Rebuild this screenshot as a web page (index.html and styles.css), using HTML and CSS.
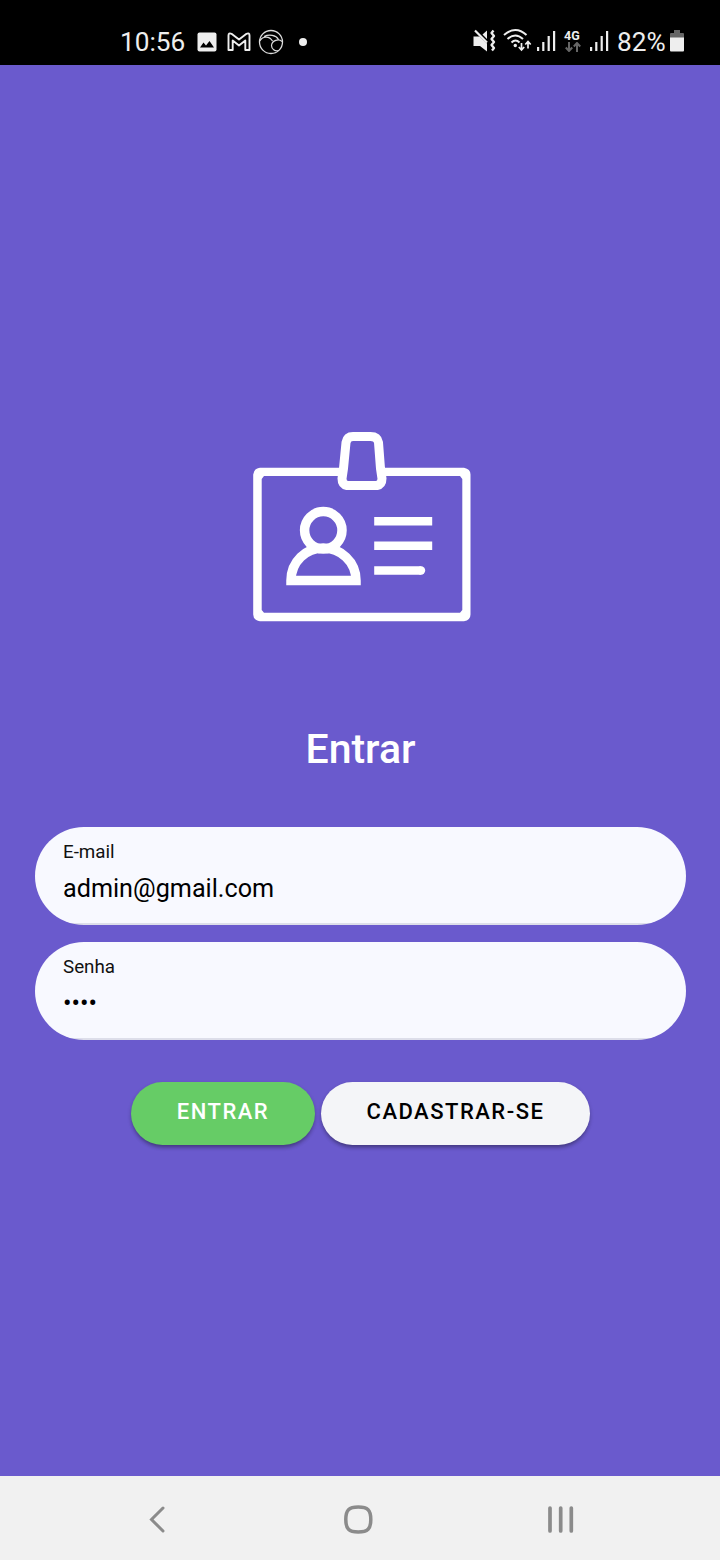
FILE: index.html
```html
<!DOCTYPE html>
<html lang="pt-BR">
<head>
<meta charset="utf-8">
<title>Entrar</title>
<link rel="stylesheet" href="styles.css">
</head>
<body>
<header class="status">
  <div class="status-left">
    <span class="clock">10:56</span>
    <svg class="ic-image" width="20" height="20" viewBox="0 0 20 20"><rect x=".5" y=".5" width="19" height="19" rx="2" fill="#eee"/><path d="M3 15.500l3.500-5 2.500 3 3.500-4.500 4.500 6.500z" fill="#000"/></svg>
    <svg class="ic-mail" width="24" height="20" viewBox="0 0 24 20"><path d="M1.500 18V3.500Q1.500 .5 4.500 1.800L12 7.500 19.500 1.800q3-1.300 3 1.700V18h-4.200V8.500L12 13.500 5.700 8.500V18z" fill="none" stroke="#eee" stroke-width="1.900" stroke-linejoin="round"/></svg>
    <svg class="ic-orb" width="26" height="26" viewBox="0 0 26 26" fill="none" stroke="#ddd"><circle cx="13" cy="13" r="11.500" stroke-width="1.300"/><path d="M1.800 12C4 7.500 11 6 14.500 12M6 7.500C11 5 18 6 20.500 10.500M24 12.500C21 9.500 14 11 13.500 16.500 13.500 20 17 22.500 20.500 21.500" stroke-width="1.200"/></svg>
    <span class="dot"></span>
  </div>
  <div class="status-right">
    <svg class="ic-mute" width="24" height="24" viewBox="0 0 24 24"><path d="M.5 7.500h6L14 14.500V22.500l-7-5.500H.5zM9.500 5.500L14 1.500V10z" fill="#eee"/><path d="M2 1.500L14 13.500" stroke="#eee" stroke-width="2.200"/><path d="M20.500 1.500l-2 2.500 2.500 3-2.500 3 2.500 3-2.500 3 2.500 3-2 2.500" fill="none" stroke="#eee" stroke-width="2.300" stroke-linejoin="round"/></svg>
    <svg class="ic-wifi" width="29" height="24" viewBox="0 0 29 24" fill="none" stroke="#eee"><path d="M1 7Q12.500-3 23.500 7M4.500 11q7.800-7 15.500 0M8.500 14.500q4-4 8 0" stroke-width="2"/><circle cx="12.300" cy="17.500" r="1.700" fill="#eee" stroke="none"/><path d="M18.500 15v7m-2.700-3l2.700 3 2.700-3M25 20.500v-7m-2.700 3l2.700-3 2.700 3" stroke-width="1.700"/></svg>
    <svg class="ic-signal" width="19" height="21" viewBox="0 0 19 21" fill="#eee"><path d="M0 17h2.200v4H0zM5.200 12h2.200v9H5.200zM10.600 6h2.200v15h-2.200zM16 1h2.200v20H16z"/></svg>
    <div class="net"><span>4G</span><svg width="16" height="10" viewBox="0 0 16 10" fill="none" stroke="#666" stroke-width="2"><path d="M4 0v9M.8 5.500L4 9l3.200-3.500M12 10V1M8.800 4.500L12 1l3.200 3.500"/></svg></div>
    <svg class="ic-signal2" width="19" height="21" viewBox="0 0 19 21" fill="#eee"><path d="M0 17h2.200v4H0zM5.200 12h2.200v9H5.200zM10.600 6h2.200v15h-2.200zM16 1h2.200v20H16z"/></svg>
    <span class="percent">82%</span>
    <svg class="ic-battery" width="14" height="22" viewBox="0 0 14 22"><path d="M4 0h6v3h3q1 0 1 1v4H0V4q0-1 1-1h3z" fill="#666"/><path d="M0 7.500h14V20.500q0 1-1 1H1q-1 0-1-1z" fill="#eee"/></svg>
  </div>
</header>
<main class="login">
  <svg class="badge" width="220" height="192" viewBox="0 0 220 192">
    <path fill="#fff" fill-rule="evenodd" d="M8 36.700H212Q218.500 38 218.500 43.500V183.500Q218.500 189 212 190.300H8Q1.200 189 1.200 183.500V43.500Q1.200 38 8 36.700zM12 45L9.700 48V179L12 181.700H208L210.300 179V48L208 45z"/>
    <g fill="none" stroke="#fff">
      <path d="M101 5.500h17.500q7 0 8 6l2 26 1.500 10q0 6-5 7H95q-5-1-5-7l1.500-10 2.500-26q1-6 7-6z" fill="#6a5acd" stroke-width="9"/>
      <circle cx="71.300" cy="99.300" r="18.700" stroke-width="9.500"/>
      <path d="M39 149.500c0-19 15-32.500 32.200-32.500S104 130.500 104 149.500z" stroke-width="9.500"/>
      <path d="M122.200 90.200h58M122.200 114.700h58M122.200 139.500h47" stroke-width="8.500"/>
      <circle cx="169" cy="139.500" r="4.200" fill="#fff" stroke="none"/>
    </g>
  </svg>
  <h1 class="title">Entrar</h1>
  <form class="form">
    <div class="field"><span class="label">E-mail</span><span class="value">admin@gmail.com</span></div>
    <div class="field"><span class="label">Senha</span><span class="value">••••</span></div>
    <div class="actions">
      <button type="button" class="btn primary">ENTRAR</button>
      <button type="button" class="btn secondary">CADASTRAR-SE</button>
    </div>
  </form>
</main>
<nav class="navbar">
  <svg class="nav-back" width="18" height="30" viewBox="0 0 18 30"><path d="M14 3L2.500 14.500 14 26" fill="none" stroke="#8b8b8b" stroke-width="3" stroke-linecap="round"/></svg>
  <svg class="nav-home" width="30" height="30" viewBox="0 0 30 30"><path d="M15.300 2C24.800 2 27.800 5 27.800 14.500S24.800 27 15.300 27 2.800 24 2.800 14.500 5.800 2 15.300 2z" fill="none" stroke="#8b8b8b" stroke-width="3.500"/></svg>
  <svg class="nav-recent" width="26" height="28" viewBox="0 0 26 28"><path d="M2 2v23M12.700 2v23M23.300 2v23" stroke="#8b8b8b" stroke-width="3.700" stroke-linecap="round"/></svg>
</nav>
</body>
</html>
```
FILE: styles.css
```css
* { box-sizing: border-box; }
body {
  margin: 0;
  width: 720px;
  height: 1560px;
  display: flex;
  flex-direction: column;
  background: #6a5acd;
  font-family: Roboto, "Liberation Sans", sans-serif;
}
svg { display: block; flex: none; }
.status {
  height: 65px;
  padding: 20px 36px 0 120px;
  background: #000;
  color: #eee;
  display: flex;
  justify-content: space-between;
}
.status-left, .status-right { display: flex; align-items: center; height: 44px; }
.clock, .percent { font-size: 26.2px; line-height: 44px; white-space: nowrap; }
.clock { width: 65px; }
.ic-image { margin-left: 12px; }
.ic-mail { margin: -1px 0 0 10px; }
.ic-orb { margin-left: 7px; }
.dot { width: 8px; height: 8px; border-radius: 50%; background: #eee; margin: -1px 0 0 15px; }
.status-right { padding-bottom: 3px; }
.ic-wifi { margin: -1px 0 0 6px; }
.ic-signal { margin-left: 5px; }
.net { width: 17px; margin-left: 8px; font-size: 12.5px; font-weight: 700; line-height: 12px; }
.net span { display: block; }
.net svg { margin-left: 1px; }
.ic-signal2 { margin-left: 9px; }
.percent { width: 49px; margin: 3px 0 0 8px; }
.ic-battery { margin-left: 4px; }
.login {
  height: 1411px;
  padding: 366px 34px 0 35px;
  display: flex;
  flex-direction: column;
  align-items: center;
}
.badge { margin-left: 3px; }
.title {
  margin: 102px 0 54px;
  font-size: 41px;
  line-height: 48px;
  font-weight: 500;
  color: #fff;
}
.form { width: 100%; }
.field {
  height: 98px;
  margin-bottom: 17px;
  padding: 14px 28px 0;
  border-radius: 49px;
  background: linear-gradient(#f8f9ff 96px, #dddeea 96px);
  display: flex;
  flex-direction: column;
}
.label { font-size: 18.8px; line-height: 22px; color: #111; }
.value { margin-top: 11px; font-size: 25.2px; line-height: 30px; color: #000; }
.actions { display: flex; justify-content: center; gap: 6px; padding-top: 25px; }
.btn {
  height: 63px;
  padding: 0 0 4px;
  border: 0;
  border-radius: 32px;
  font: 500 22px/26px Roboto, sans-serif;
  letter-spacing: 1.5px;
  box-shadow: 0 4px 4px -2px rgba(0, 0, 0, .25), 0 2px 4px rgba(0, 0, 0, .2);
}
.primary { width: 184px; background: #66cc66; color: #fff; }
.secondary { width: 269px; background: #f4f5f8; color: #000; }
.navbar {
  height: 84px;
  padding: 3px 0 0 149px;
  background: #f1f1f1;
  display: flex;
  align-items: center;
}
.nav-home { margin-left: 176px; }
.nav-recent { margin-left: 175px; }
```
